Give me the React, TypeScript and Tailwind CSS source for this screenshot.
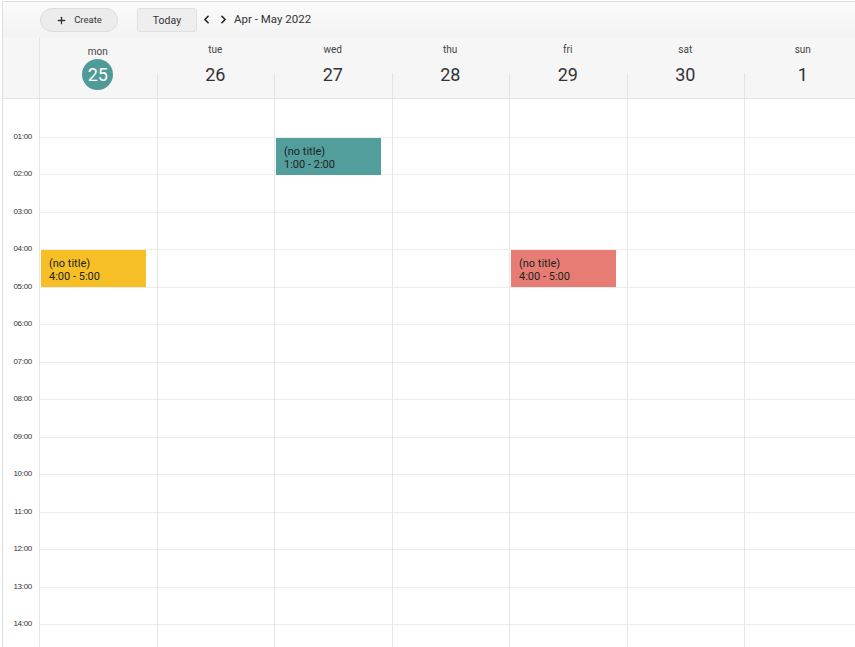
import React from 'react';
import { ChevronLeft, ChevronRight, Plus } from 'lucide-react';

const HOUR = 37.5;

const days = [
  { name: 'mon', date: 25, today: true },
  { name: 'tue', date: 26 },
  { name: 'wed', date: 27 },
  { name: 'thu', date: 28 },
  { name: 'fri', date: 29 },
  { name: 'sat', date: 30 },
  { name: 'sun', date: 1 },
];

const events = [
  { day: 0, start: 4, end: 5, label: '4:00 - 5:00', color: 'bg-[#f6bf26]' },
  { day: 2, start: 1, end: 2, label: '1:00 - 2:00', color: 'bg-[#519e9c]' },
  { day: 4, start: 4, end: 5, label: '4:00 - 5:00', color: 'bg-[#e67c73]' },
];

const hours = Array.from({ length: 15 }, (_, i) => i);

export default function App() {
  return (
    <div className="h-[647px] w-[855px] overflow-hidden bg-white font-['Roboto',sans-serif] text-[#333]">
      <div className="ml-[2px] mt-[1px] h-[646px] border-l border-t border-[#dedede]">
        {/* toolbar */}
        <div className="flex h-[35px] items-center bg-gradient-to-b from-[#fbfbfb] to-[#f3f3f3] pl-[37px]">
          <button className="flex h-[24px] w-[78px] items-center justify-center gap-[7px] rounded-full border border-[#dcdcdc] bg-[#ececec] pt-px text-[9.5px] text-[#333]">
            <Plus size={11} strokeWidth={2.8} />
            Create
          </button>
          <button className="ml-[19px] h-[24px] w-[60px] rounded-[3px] border border-[#e0e0e0] bg-[#eeeeee] pt-[2px] text-[10.5px] text-[#333]">
            Today
          </button>
          <ChevronLeft size={13} strokeWidth={3} className="ml-[3px] text-[#222]" />
          <ChevronRight size={13} strokeWidth={3} className="ml-[4px] text-[#222]" />
          <span className="ml-[4px] pt-px text-[11.5px] text-[#333]">Apr - May 2022</span>
        </div>

        {/* day header */}
        <div className="flex h-[62px] border-b border-[#e3e3e3] bg-[#f6f6f6]">
          <div className="w-[36px] shrink-0" />
          {days.map((d, i) => (
            <div key={d.name} className="relative w-[117.5px] shrink-0">
              <div
                className={`absolute bottom-0 left-0 w-px bg-[#e3e3e3] ${i > 0 ? 'h-[25px]' : 'h-full'}`}
              />
              <div className="flex flex-col items-center">
                {d.today ? (
                  <>
                    <span className="mt-[9px] text-[10px] leading-[12px] text-[#444]">{d.name}</span>
                    <span className="mt-px flex h-[31px] w-[31px] items-center justify-center rounded-full bg-[#4e9b99] text-[18px] text-white">
                      {d.date}
                    </span>
                  </>
                ) : (
                  <>
                    <span className="mt-[7px] text-[10px] leading-[12px] text-[#444]">{d.name}</span>
                    <span className="mt-[3px] text-[18px] leading-[31px] text-[#333]">{d.date}</span>
                  </>
                )}
              </div>
            </div>
          ))}
        </div>

        {/* grid */}
        <div className="flex">
          <div className="relative w-[36px] shrink-0">
            {hours.map((h) =>
              h === 0 ? (
                <div key={h} className="h-[37.5px]" />
              ) : (
                <div key={h} className="relative h-[37.5px]">
                  <span className="absolute right-[7px] top-[-6px] font-['Liberation_Sans',sans-serif] text-[8px] leading-[12px] tracking-[-0.3px] text-[#333]">
                    {String(h).padStart(2, '0')}:00
                  </span>
                </div>
              )
            )}
          </div>
          {days.map((d, i) => (
            <div key={d.name} className="relative w-[117.5px] shrink-0 border-l border-[#e6e6e6]">
              {hours.map((h) => (
                <div key={h} className={`h-[37.5px] ${h > 0 ? 'border-t border-[#ececec]' : ''}`} />
              ))}
              {events
                .filter((e) => e.day === i)
                .map((e) => (
                  <div
                    key={e.label}
                    className={`absolute left-px w-[105px] ${e.color} px-[8px] pt-[7px] text-[11px] leading-[13px] text-[#222]`}
                    style={{ top: e.start * HOUR + 1, height: (e.end - e.start) * HOUR - 0.5 }}
                  >
                    <div>(no title)</div>
                    <div>{e.label}</div>
                  </div>
                ))}
            </div>
          ))}
        </div>
      </div>
    </div>
  );
}
